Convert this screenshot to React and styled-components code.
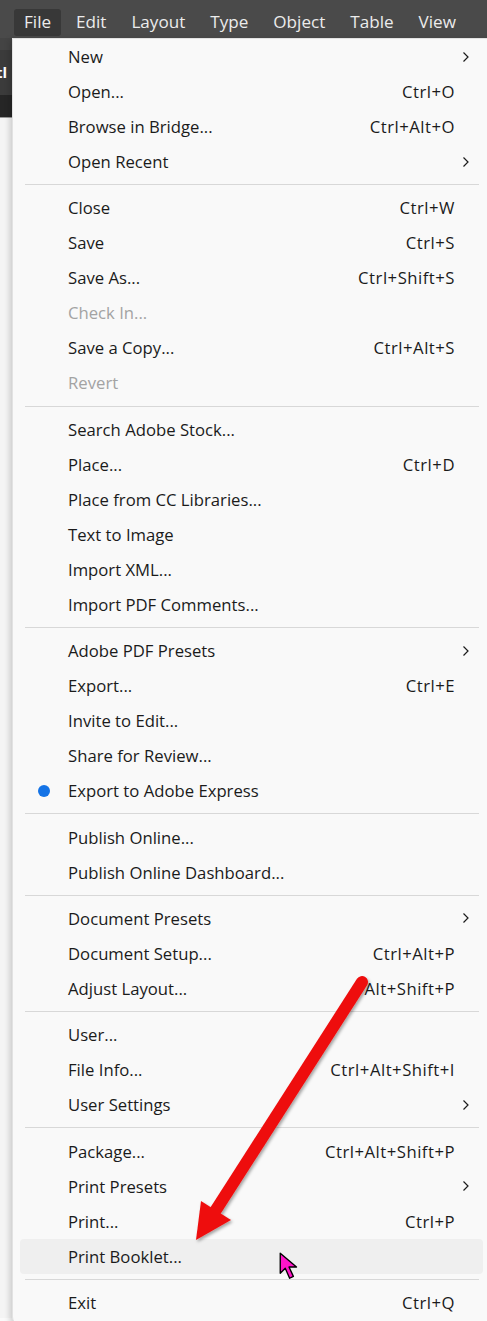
import React from "react";
import styled, { createGlobalStyle } from "styled-components";

const GlobalStyle = createGlobalStyle`
  html, body { margin: 0; padding: 0; background: #fafafa; }
  body { font-family: "Open Sans", "Noto Sans", "Liberation Sans", sans-serif; }
`;

const sections = [
  [
    { label: "New", sub: true },
    { label: "Open...", keys: "Ctrl+O" },
    { label: "Browse in Bridge...", keys: "Ctrl+Alt+O" },
    { label: "Open Recent", sub: true },
  ],
  [
    { label: "Close", keys: "Ctrl+W" },
    { label: "Save", keys: "Ctrl+S" },
    { label: "Save As...", keys: "Ctrl+Shift+S" },
    { label: "Check In...", disabled: true },
    { label: "Save a Copy...", keys: "Ctrl+Alt+S" },
    { label: "Revert", disabled: true },
  ],
  [
    { label: "Search Adobe Stock..." },
    { label: "Place...", keys: "Ctrl+D" },
    { label: "Place from CC Libraries..." },
    { label: "Text to Image" },
    { label: "Import XML..." },
    { label: "Import PDF Comments..." },
  ],
  [
    { label: "Adobe PDF Presets", sub: true },
    { label: "Export...", keys: "Ctrl+E" },
    { label: "Invite to Edit..." },
    { label: "Share for Review..." },
    { label: "Export to Adobe Express", dot: true },
  ],
  [
    { label: "Publish Online..." },
    { label: "Publish Online Dashboard..." },
  ],
  [
    { label: "Document Presets", sub: true },
    { label: "Document Setup...", keys: "Ctrl+Alt+P" },
    { label: "Adjust Layout...", keys: "Alt+Shift+P" },
  ],
  [
    { label: "User..." },
    { label: "File Info...", keys: "Ctrl+Alt+Shift+I" },
    { label: "User Settings", sub: true },
  ],
  [
    { label: "Package...", keys: "Ctrl+Alt+Shift+P" },
    { label: "Print Presets", sub: true },
    { label: "Print...", keys: "Ctrl+P" },
    { label: "Print Booklet...", hover: true },
  ],
  [{ label: "Exit", keys: "Ctrl+Q" }],
];

const topMenus = ["File", "Edit", "Layout", "Type", "Object", "Table", "View"];

export default function App() {
  return (
    <Screen>
      <GlobalStyle />
      <MenuBar>
        {topMenus.map((m, i) => (
          <TopItem key={m} $active={i === 0}>{m}</TopItem>
        ))}
      </MenuBar>
      <Body>
        <SideStrip>
          <StripTitle>tl</StripTitle>
          <StripRuler />
          <StripCanvas />
        </SideStrip>
        <Dropdown>
          {sections.map((items, si) => (
            <React.Fragment key={si}>
              {si > 0 && <Separator />}
              {items.map((it) => (
                <Row key={it.label} $hover={it.hover}>
                  <Mark>{it.dot && <Dot />}</Mark>
                  <Label $disabled={it.disabled}>{it.label}</Label>
                  <Keys>{it.keys}</Keys>
                  <Chevron>{it.sub && <ChevronIcon />}</Chevron>
                </Row>
              ))}
            </React.Fragment>
          ))}
        </Dropdown>
      </Body>
      <Arrow viewBox="0 0 487 1321" width="487" height="1321">
        <defs>
          <filter id="sh" x="-20%" y="-20%" width="140%" height="140%">
            <feDropShadow dx="1.5" dy="2" stdDeviation="1.5" floodColor="#000" floodOpacity="0.35" />
          </filter>
        </defs>
        <g filter="url(#sh)">
          <line x1="362" y1="982" x2="214" y2="1213" stroke="#ee1111" strokeWidth="12" strokeLinecap="round" />
          <polygon points="196,1240 201,1201 231,1220" fill="#ee1111" />
        </g>
      </Arrow>
      <Cursor viewBox="0 0 20 24" width="25" height="30">
        <path d="M1 1 L1 17 L5 13 L8.5 21 L11.5 19.5 L8 12 L14 12 Z" fill="#ff14c8" stroke="#000" strokeWidth="1.1" strokeLinejoin="round" />
      </Cursor>
    </Screen>
  );
}

const Screen = styled.div`
  position: relative;
  width: 487px;
  height: 1321px;
  overflow: hidden;
  background: #fafafa;
`;

const MenuBar = styled.div`
  display: flex;
  align-items: center;
  gap: 5px;
  height: 38px;
  padding: 6px 0 0 14px;
  background: #4a4a4a;
  box-sizing: border-box;
`;

const TopItem = styled.div`
  padding: 2px 10px 3px;
  height: 22px;
  border-radius: 3px;
  font-size: 17.1px;
  line-height: 22px;
  color: #ececec;
  background: ${(p) => (p.$active ? "#383838" : "transparent")};
  white-space: nowrap;
`;

const Body = styled.div`
  display: flex;
  align-items: flex-start;
`;

const SideStrip = styled.div`
  width: 12px;
  flex: none;
  display: flex;
  flex-direction: column;
  background: #444;
  padding-top: 12px;
`;

const StripTitle = styled.div`
  height: 45px;
  background: #3b3b3b;
  color: #fff;
  font-weight: 700;
  font-size: 15px;
  line-height: 45px;
  text-indent: -4px;
  overflow: hidden;
`;

const StripRuler = styled.div`
  height: 22px;
  background: #262626;
  border-bottom: 1px solid #999;
`;

const StripCanvas = styled.div`
  height: 1200px;
  background: #f4f4f4;
`;

const Dropdown = styled.div`
  flex: none;
  width: 480px;
  margin-right: -5px;
  box-sizing: border-box;
  padding: 0 0 4px;
  background: #f9f9f9;
  border: 1px solid #e2e2e2;
  border-radius: 0 0 8px 8px;
  box-shadow: -2px 2px 6px rgba(0, 0, 0, 0.18);
`;

const Row = styled.div`
  display: grid;
  grid-template-columns: 35px 1fr auto 28px;
  align-items: center;
  height: 35px;
  margin: 0 8px 0 7px;
  padding-left: 13px;
  border-radius: 4px;
  background: ${(p) => (p.$hover ? "#efefef" : "transparent")};
`;

const Mark = styled.div`
  display: flex;
  align-items: center;
`;

const Dot = styled.span`
  width: 12px;
  height: 12px;
  border-radius: 50%;
  background: #1473e6;
  margin-left: 5px;
`;

const Label = styled.span`
  font-size: 16.7px;
  color: ${(p) => (p.$disabled ? "#a3a3a3" : "#1b1b1b")};
  white-space: nowrap;
`;

const Keys = styled.span`
  font-size: 16.7px;
  letter-spacing: 0.5px;
  color: #1b1b1b;
  white-space: nowrap;
`;

const Chevron = styled.div`
  display: flex;
  align-items: center;
  padding-left: 7px;
`;

const ChevronIcon = () => (
  <svg width="8" height="12" viewBox="0 0 8 12">
    <path d="M1.5 1.5 L6 6 L1.5 10.5" fill="none" stroke="#1b1b1b" strokeWidth="1.2" />
  </svg>
);

const Separator = styled.div`
  height: 1px;
  background: #d8d8d8;
  margin: 5.2px 12px 5.2px 12px;
`;

const Arrow = styled.svg`
  position: absolute;
  left: 0;
  top: 0;
  pointer-events: none;
`;

const Cursor = styled.svg`
  position: absolute;
  left: 279px;
  top: 1252px;
`;
